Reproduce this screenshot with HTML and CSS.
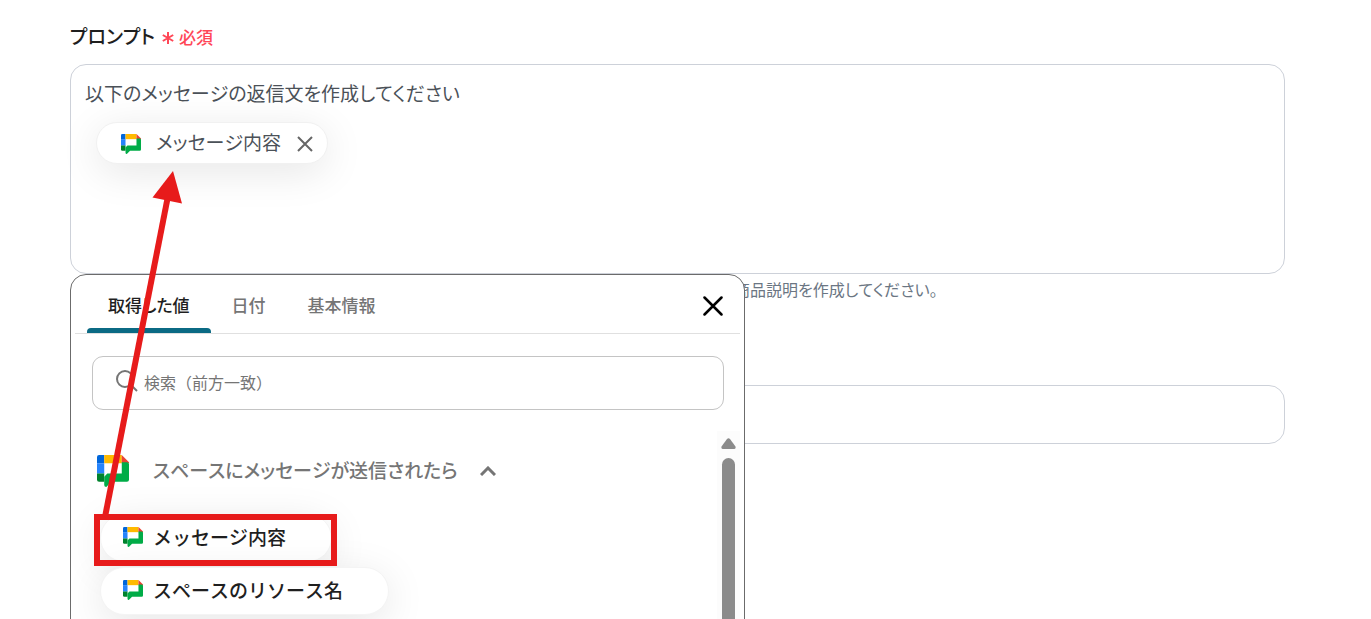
FILE: index.html
```html
<!DOCTYPE html>
<html lang="ja">
<head>
    <meta charset="UTF-8">
    <meta name="viewport" content="width=device-width, initial-scale=1.0">
    <title>プロンプト</title>
    <link rel="stylesheet" href="styles.css">
</head>
<body>
<!-- Shared icon -->
<svg class="sprite" aria-hidden="true">
    <symbol id="chat-icon" viewBox="0 0 31 31">
        <path fill="#0066da" d="M2 0H7V8H0V2Q0 0 2 0Z"/>
        <path fill="#2684fc" d="M0 8H7V18H0Z"/>
        <path fill="#00832d" d="M0 18H7V26H2Q0 26 0 24Z"/>
        <path fill="#ffba00" d="M7 0H24V8H7Z"/>
        <path fill="#ea4335" d="M24 0L31 7V8H24Z"/>
        <path fill="#00ac47" d="M24 7H29Q31 7 31 9V24Q31 26 29 26H14L9 31Q7 31 7 29V21L10 18H24Z"/>
    </symbol>
</svg>

<main class="container">
    <div class="field-label">
        <span class="label-text" id="prompt-label">プロンプト</span>
        <span class="required">
            <svg width="12" height="12" viewBox="0 0 12 12"><path d="M6 0V12M0.8 3L11.2 9M11.2 3L0.8 9"/></svg>
            必須
        </span>
    </div>

    <div class="editor-wrap">
        <div class="editor" role="textbox" contenteditable="true" aria-multiline="true" aria-labelledby="prompt-label">
            <p>以下のメッセージの返信文を作成してください</p>
            <span class="chip" contenteditable="false">
                <svg class="icon-small"><use href="#chat-icon"/></svg>
                メッセージ内容
                <button class="chip-remove" aria-label="削除">
                    <svg width="16" height="16" viewBox="0 0 16 16"><path d="M1 1L15 15M15 1L1 15"/></svg>
                </button>
            </span>
        </div>

        <!-- Value picker -->
        <section class="picker">
            <div class="picker-header">
                <div class="tabs" role="tablist">
                    <button class="tab active" role="tab" aria-selected="true">取得した値</button>
                    <button class="tab" role="tab">日付</button>
                    <button class="tab" role="tab">基本情報</button>
                </div>
                <button class="picker-close" aria-label="閉じる">
                    <svg width="20" height="20" viewBox="0 0 20 20"><path d="M1.5 1.5L18.5 18.5M18.5 1.5L1.5 18.5"/></svg>
                </button>
            </div>

            <label class="search">
                <svg width="22" height="22" viewBox="0 0 22 22"><circle cx="9" cy="9" r="8"/><path d="M14.5 14.5L21 21"/></svg>
                <input type="text" placeholder="検索（前方一致）" aria-label="検索">
            </label>

            <div class="picker-body">
                <div class="values">
                    <button class="group-toggle" aria-expanded="true">
                        <svg class="icon-large"><use href="#chat-icon"/></svg>
                        <span>スペースにメッセージが送信されたら</span>
                        <svg class="chevron" width="16" height="10" viewBox="0 0 16 10"><path d="M1 9L8 2L15 9"/></svg>
                    </button>
                    <button class="value"><svg class="icon-small"><use href="#chat-icon"/></svg>メッセージ内容</button>
                    <button class="value"><svg class="icon-small"><use href="#chat-icon"/></svg>スペースのリソース名</button>
                </div>
                <div class="scrollbar">
                    <svg width="15" height="11" viewBox="0 0 15 11"><path d="M6 1Q7.500 -0.500 9 1L14.500 8.500Q15 11 13 11H2Q0 11 0.500 8.500Z"/></svg>
                    <div class="thumb"></div>
                </div>
            </div>
        </section>
    </div>

    <p class="hint">商品説明を作成してください。</p>
    <input class="text-input" type="text" aria-label="追加入力">
</main>

<!-- Annotation: the selected value goes into the prompt -->
<div class="highlight"></div>
<svg class="arrow" width="100" height="360" viewBox="90 160 100 360">
    <path class="arrow-line" d="M105 517L168 196"/>
    <path class="arrow-head" d="M173 171L182 203.500L152.500 197.500Z"/>
</svg>
</body>
</html>
```
FILE: styles.css
```css
* {
    margin: 0;
    padding: 0;
    box-sizing: border-box;
}

body {
    font-family: "Noto Sans CJK JP", sans-serif;
    font-feature-settings: "palt";
    font-kerning: none;
    font-size: 19px;
    color: #4b5158;
    background: #fff;
    height: 100vh;
    overflow: hidden;
}

button,
input {
    font: inherit;
    font-feature-settings: inherit;
    font-kerning: inherit;
    color: inherit;
    background: none;
    border: none;
}

button {
    cursor: pointer;
}

svg {
    flex: none;
    fill: none;
}

.sprite {
    position: absolute;
    width: 0;
    height: 0;
}

.container {
    padding: 20px 86px 0 70px;
}

.field-label {
    display: flex;
    align-items: center;
    gap: 7px;
    height: 30px;
    margin-bottom: 14px;
}

.label-text {
    font-weight: 500;
    color: #1f1f1f;
}

.required {
    display: flex;
    align-items: center;
    gap: 5px;
    padding-top: 3px;
    font-size: 17px;
    font-weight: 500;
    color: #ff4757;
}

.required svg {
    margin-top: 3px;
    stroke: #ff4757;
    stroke-width: 2;
}

.editor-wrap {
    position: relative;
}

.editor {
    min-height: 210px;
    padding: 14px;
    border: 1px solid #cdd1d9;
    border-radius: 16px;
    line-height: 28px;
    outline: none;
}

.chip {
    display: inline-flex;
    align-items: center;
    height: 42px;
    margin: 15px 0 0 11px;
    padding: 0 14px 2px 24px;
    border: 1px solid #f1f1f1;
    border-radius: 21px;
    background: #fff;
    box-shadow: 0 8px 40px rgba(0, 0, 0, 0.1);
}

.icon-small {
    width: 20px;
    height: 20px;
    margin-top: 3px;
    margin-right: 15px;
}

.chip-remove {
    display: flex;
    margin-top: 3px;
    margin-left: 16px;
}

.chip-remove svg {
    stroke: #666;
    stroke-width: 2;
}

.picker {
    position: absolute;
    top: 100%;
    left: 0;
    width: 675px;
    height: 400px;
    border: 1px solid #6b6b6b;
    border-radius: 16px;
    background: #fff;
}

.picker-header {
    display: flex;
    justify-content: space-between;
    height: 59px;
    margin: 0 4px;
    padding: 0 17px 0 12px;
    border-bottom: 1px solid #e0e0e0;
}

.tabs {
    display: flex;
}

.tab {
    padding: 6px 21px 0;
    border-bottom: 5px solid transparent;
    font-size: 17px;
    font-weight: 500;
    color: #757575;
}

.tab.active {
    position: relative;
    color: #1f1f1f;
}

.tab.active::after {
    content: "";
    position: absolute;
    left: 0;
    right: 0;
    bottom: -5px;
    height: 5px;
    border-radius: 4px 4px 0 0;
    background: #0b6a84;
}

.picker-close {
    display: flex;
    align-items: center;
    padding-top: 4px;
}

.picker-close svg {
    stroke: #000;
    stroke-width: 2.5;
    stroke-linecap: round;
}

.search {
    display: flex;
    align-items: center;
    gap: 6px;
    height: 54px;
    margin: 22px 20px 0 21px;
    padding: 0 23px 2px;
    border: 1px solid #c4c4c4;
    border-radius: 11px;
}

.search svg {
    margin-bottom: 2px;
    stroke: #757575;
    stroke-width: 2;
}

.search input {
    flex: 1;
    font-size: 16px;
    font-feature-settings: normal;
    outline: none;
}

.search input::placeholder {
    color: #757575;
}

.picker-body {
    display: flex;
    justify-content: space-between;
    height: 260px;
    padding: 21px 4px 0 26px;
}

.values {
    display: flex;
    flex-direction: column;
    align-items: flex-start;
    gap: 5px;
    padding-top: 20px;
}

.group-toggle {
    display: flex;
    align-items: center;
    height: 36px;
    margin-bottom: 22px;
    font-weight: 500;
    color: #757575;
}

.icon-large {
    width: 32px;
    height: 32px;
    margin-top: 4px;
    margin-right: 24px;
}

.chevron {
    margin-top: 4px;
    margin-left: 22px;
    stroke: #757575;
    stroke-width: 3;
}

.value {
    display: flex;
    align-items: center;
    height: 48px;
    margin-left: 3px;
    padding: 0 45px 3px 22px;
    border: 1px solid #f4f4f4;
    border-radius: 24px;
    background: #fff;
    box-shadow: 0 8px 40px rgba(0, 0, 0, 0.1);
    font-weight: 500;
    font-feature-settings: normal;
    color: #1f1f1f;
}

.value .icon-small {
    margin-top: 0;
    margin-right: 10px;
}

.scrollbar {
    display: flex;
    flex-direction: column;
    align-items: center;
    gap: 9px;
    width: 23px;
    padding-top: 7px;
    background: #fcfcfc;
}

.scrollbar svg {
    fill: #8b8b8b;
}

.thumb {
    flex: 1;
    width: 13px;
    border-radius: 7px;
    background: #8b8b8b;
}

.hint {
    margin: 3px 0 0 664px;
    font-size: 16px;
    line-height: 24px;
    color: #6b7683;
}

.text-input {
    display: block;
    width: 100%;
    height: 59px;
    margin-top: 84px;
    padding: 0 14px;
    border: 1px solid #cdd1d9;
    border-radius: 16px;
}

.highlight {
    position: absolute;
    top: 514px;
    left: 94px;
    width: 243px;
    height: 52px;
    border: 6px solid #e71b1b;
    pointer-events: none;
}

.arrow {
    position: absolute;
    top: 160px;
    left: 90px;
    pointer-events: none;
}

.arrow-line {
    stroke: #e71b1b;
    stroke-width: 6;
}

.arrow-head {
    fill: #e71b1b;
}
```
